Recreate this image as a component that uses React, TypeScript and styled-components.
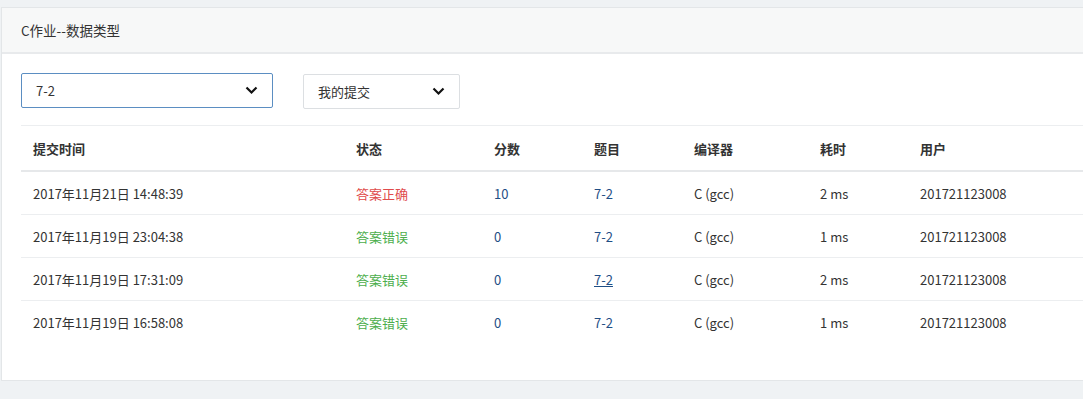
import React from 'react'
import styled, { createGlobalStyle } from 'styled-components'

const GlobalStyle = createGlobalStyle`
  html, body {
    margin: 0;
    padding: 0;
    background: #eff2f4;
    overflow: hidden;
  }
  body {
    font-family: "Noto Sans CJK SC", "Noto Sans", sans-serif;
    font-size: 13px;
    color: #333;
  }
`

const Page = styled.div`
  padding: 7px 0 0 1px;
  height: 399px;
  box-sizing: border-box;
`

const Card = styled.div`
  width: 1120px;
  background: #fff;
  border: 1px solid #e3e6e8;
  border-right: none;
`

const CardHeader = styled.div`
  background: #f7f8f8;
  height: 44px;
  padding: 0 19px;
  display: flex;
  align-items: center;
  border-bottom: 2px solid #e8eaec;
  font-size: 13.5px;
  color: #333;
`

const CardBody = styled.div`
  padding: 19px 0 37px 19px;
`

const Filters = styled.div`
  display: flex;
  gap: 30px;
  margin-bottom: 16px;
`

const Select = styled.div<{ width: number; focused?: boolean }>`
  width: ${p => p.width}px;
  height: 35px;
  box-sizing: border-box;
  border: 1px solid ${p => (p.focused ? '#5b8ec2' : '#dcdfe2')};
  border-radius: 2px;
  display: flex;
  align-items: center;
  justify-content: space-between;
  padding: 0 14px 0 14px;
  font-size: 13px;
  color: #333;
  margin-top: ${p => (p.focused ? 0 : 1)}px;
`

const Chevron = () => (
  <svg width="13" height="9" viewBox="0 0 13 9">
    <path d="M1.5 1.5 L6.5 6.5 L11.5 1.5" fill="none" stroke="#111" strokeWidth="2.2" />
  </svg>
)

const Table = styled.table`
  width: 1063px;
  border-collapse: collapse;
  border-top: 1px solid #eceef0;
`

const Th = styled.th<{ width?: number }>`
  text-align: left;
  font-weight: bold;
  font-size: 13px;
  color: #333;
  height: 44px;
  padding: 0 12px;
  border-bottom: 2px solid #e6e8ea;
  width: ${p => (p.width ? `${p.width - 24}px` : 'auto')};
`

const Td = styled.td<{ last?: boolean }>`
  height: 42px;
  padding: 0 12px;
  font-size: 13px;
  color: #333;
  border-bottom: ${p => (p.last ? 'none' : '1px solid #eceef0')};
`

const Status = styled.span<{ ok: boolean }>`
  color: ${p => (p.ok ? '#e04b4b' : '#4cae4c')};
`

const Link = styled.a<{ hovered?: boolean }>`
  color: #1f4e85;
  text-decoration: ${p => (p.hovered ? 'underline' : 'none')};
`

const columns = [
  { title: '提交时间', width: 323 },
  { title: '状态', width: 138 },
  { title: '分数', width: 100 },
  { title: '题目', width: 100 },
  { title: '编译器', width: 126 },
  { title: '耗时', width: 100 },
  { title: '用户' },
]

const rows = [
  { time: '2017年11月21日 14:48:39', ok: true, score: '10', problem: '7-2', compiler: 'C (gcc)', cost: '2 ms', user: '201721123008' },
  { time: '2017年11月19日 23:04:38', ok: false, score: '0', problem: '7-2', compiler: 'C (gcc)', cost: '1 ms', user: '201721123008' },
  { time: '2017年11月19日 17:31:09', ok: false, score: '0', problem: '7-2', compiler: 'C (gcc)', cost: '2 ms', user: '201721123008', hovered: true },
  { time: '2017年11月19日 16:58:08', ok: false, score: '0', problem: '7-2', compiler: 'C (gcc)', cost: '1 ms', user: '201721123008' },
]

export default function App() {
  return (
    <Page>
      <GlobalStyle />
      <Card>
        <CardHeader>C作业--数据类型</CardHeader>
        <CardBody>
          <Filters>
            <Select width={252} focused>
              <span>7-2</span>
              <Chevron />
            </Select>
            <Select width={157}>
              <span>我的提交</span>
              <Chevron />
            </Select>
          </Filters>
          <Table>
            <thead>
              <tr>
                {columns.map(c => (
                  <Th key={c.title} width={c.width}>{c.title}</Th>
                ))}
              </tr>
            </thead>
            <tbody>
              {rows.map((r, i) => {
                const last = i === rows.length - 1
                return (
                  <tr key={r.time}>
                    <Td last={last}>{r.time}</Td>
                    <Td last={last}><Status ok={r.ok}>{r.ok ? '答案正确' : '答案错误'}</Status></Td>
                    <Td last={last}><Link>{r.score}</Link></Td>
                    <Td last={last}><Link hovered={r.hovered}>{r.problem}</Link></Td>
                    <Td last={last}>{r.compiler}</Td>
                    <Td last={last}>{r.cost}</Td>
                    <Td last={last}>{r.user}</Td>
                  </tr>
                )
              })}
            </tbody>
          </Table>
        </CardBody>
      </Card>
    </Page>
  )
}
